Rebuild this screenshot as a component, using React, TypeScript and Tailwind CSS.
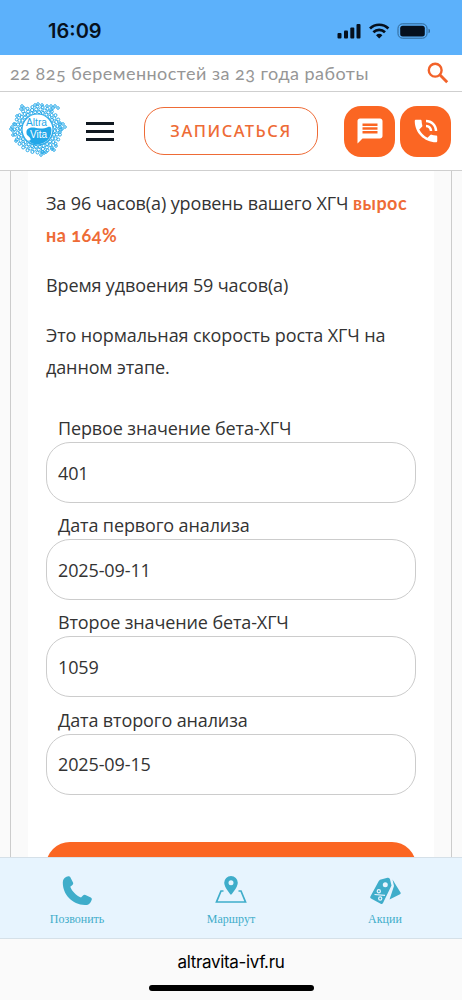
import { MdMessage, MdPhoneInTalk } from "react-icons/md";

const fields = [
  { label: "Первое значение бета-ХГЧ", value: "401" },
  { label: "Дата первого анализа", value: "2025-09-11" },
  { label: "Второе значение бета-ХГЧ", value: "1059" },
  { label: "Дата второго анализа", value: "2025-09-15" },
];

// Bubbles around the logo disc: [radius of the ring, count, bubble size]
const rings = [
  [17.4, 28, 1.5],
  [20.2, 30, 1.6],
  [23, 28, 1.5],
];

// Loose bubbles outside the rings
const splashes = [
  [17, 7], [19, 9], [16, 10], [42, 7], [46, 7], [50, 7], [48, 9], [46, 11], [53, 9],
  [55, 24], [58, 25], [60, 28], [57, 30], [55, 28], [55, 33], [7, 28], [8, 32],
  [9, 25], [6, 30], [8, 36], [36, 56], [39, 54], [41, 53], [37, 53], [47, 50],
  [49, 51], [51, 47], [12, 17], [30, 6], [33, 5], [37, 6], [11, 42],
];

const Logo = () => (
  <svg className="h-[64px] w-[66px] shrink-0" viewBox="0 0 66 64">
    <g fill="none" stroke="#2cabe9" strokeWidth="1">
      {rings.map(([ring, count, size]) =>
        Array.from({ length: count }, (_, i) => {
          const angle = ((i + ring) / count) * Math.PI * 2;
          return (
            <circle
              key={`${ring}-${i}`}
              cx={32.5 + Math.cos(angle) * ring}
              cy={30.5 + Math.sin(angle) * ring}
              r={size}
            />
          );
        })
      )}
      {splashes.map(([x, y]) => (
        <circle key={`${x}-${y}`} cx={x} cy={y} r="1.3" />
      ))}
    </g>
    <circle cx="32.500" cy="30.500" r="15.500" fill="#fff" stroke="#2cabe9" strokeWidth="1.200" />
    <path d="M22 36C20 30 24 28 29 28.500C34 30 39 30 43 28C45 27 46.500 28 46.500 31A14 14 0 0 1 23 41.500C28 42 25 38 22 36Z" fill="#22a7e8" />
    <text x="21" y="27" fontSize="10" fill="#22a7e8" fontFamily="Liberation Sans" textLength="21" lengthAdjust="spacingAndGlyphs">
      Altra
    </text>
    <text x="25" y="39" fontSize="10" fill="#fff" fontFamily="Liberation Sans" textLength="17" lengthAdjust="spacingAndGlyphs">
      Vita
    </text>
  </svg>
);

const StatusBar = () => (
  <div className="flex h-[55px] items-center justify-between bg-[#5cb1fb] pt-[7px] pr-[31px] pl-[48px] text-[#06101d]">
    <span className="font-[Inter,sans-serif] text-[20px] font-semibold">16:09</span>
    <svg className="h-[16px] w-[94px]" viewBox="0 0 94 16" fill="#06101d">
      <rect x="0.500" y="10" width="4" height="5.500" rx="1" />
      <rect x="7" y="7.500" width="4" height="8" rx="1" />
      <rect x="13.300" y="4.500" width="4" height="11" rx="1" />
      <rect x="19.500" y="1" width="4" height="14.500" rx="1" />
      <g fill="none" stroke="#06101d" strokeWidth="2.700">
        <path d="M33 5.500a13.200 13.200 0 0 1 18.400 0" />
        <path d="M36.400 9.300a8.300 8.300 0 0 1 11.600 0" />
      </g>
      <path d="M39 12.300a4.800 4.800 0 0 1 6.400 0L42.200 15.500Z" />
      <rect x="61" y="0.800" width="29" height="14.400" rx="4.500" fill="none" stroke="#2f6593" />
      <rect x="63.200" y="2.800" width="24.600" height="10.600" rx="2.500" />
      <path d="M91.500 5.800c2 .5 2 4 0 4.500Z" fill="#2f6593" />
    </svg>
  </div>
);

const SearchIcon = () => (
  <svg className="size-[22px]" viewBox="0 0 22 22" fill="none" stroke="#f2622a" strokeWidth="2.400">
    <circle cx="8.200" cy="8.200" r="6.400" />
    <path d="m12.800 12.800 7.400 7.400" strokeWidth="2.900" />
  </svg>
);

const PhoneIcon = () => (
  <svg className="h-[30px] w-[30px]" viewBox="0 0 30 30" fill="#3fadca">
    <path d="M4.500.8 6.300.2Q7.600 0 8.200 1L11 6.500q.6 1.500-.6 2.500L8.300 10.800C9.600 15 14.500 20 19 21.500L21 19.400q1-1.100 2.500-.5l5.300 2.600q1.300.7 1 2L29 25.400Q27.500 29 23 29C10 28.500.8 18.500.8 6.500.9 3.800 2 1.800 4.500.8Z" />
  </svg>
);

const MapIcon = () => (
  <svg className="mb-[2px] h-[28px] w-[32px]" viewBox="0 0 32 28">
    <path d="M8.500 15H6L1.500 26H30.500L26 15H23.500" fill="none" stroke="#3fadca" strokeWidth="1.700" />
    <path
      d="M16 0a6.800 6.800 0 0 0-6.800 6.800C9.200 11.500 16 19 16 19s6.800-7.500 6.800-12.200A6.800 6.800 0 0 0 16 0Zm0 4.200a2.500 2.500 0 1 1 0 5A2.500 2.500 0 0 1 16 4.200Z"
      fill="#3fadca"
      fillRule="evenodd"
    />
  </svg>
);

const TagsIcon = () => (
  <svg className="h-[28px] w-[32px]" viewBox="0 0 32 28">
    <path d="M11 2.800 18.500.8q2-.4 2.500 1.500L22.500 8.500 14 26q-.8 1.600-2.300.8L2 21.500Q.7 20.800 1.400 19.400L9.800 4Z" fill="#3fadca" />
    <path d="m23.500 2.500 8 13q.6 1-.5 1.700L20.500 22.500 25 9Z" fill="#3fadca" />
    <circle cx="16.300" cy="7.700" r="2.500" fill="#e7f4fe" />
    <g fill="none" stroke="#e7f4fe" strokeWidth="1.200">
      <circle cx="9.800" cy="14.300" r="1.600" />
      <circle cx="11.200" cy="21.500" r="1.600" />
      <path d="m5.500 17.500 10.500.8" />
    </g>
  </svg>
);

const tabs = [
  { title: "Позвонить", icon: <PhoneIcon /> },
  { title: "Маршрут", icon: <MapIcon /> },
  { title: "Акции", icon: <TagsIcon /> },
];

export default function App() {
  return (
    <div className="flex h-[1000px] w-[462px] flex-col overflow-hidden bg-white font-['Open_Sans','Noto_Sans',sans-serif] text-[#333]">
      <StatusBar />

      <div className="flex h-[37px] shrink-0 items-center justify-between border-b border-[#cfcfcf] pr-[13px] pl-[10px]">
        <span className="font-[Lato,'Open_Sans',sans-serif] text-[18px] tracking-[0.480px] whitespace-nowrap text-[#969696] oldstyle-nums">
          22 825 беременностей за 23 года работы
        </span>
        <SearchIcon />
      </div>

      <header className="flex h-[79px] shrink-0 items-center border-b border-[#cfcfcf] pl-[5px]">
        <Logo />
        <div className="ml-[15px] flex w-[28px] flex-col gap-[5px]">
          <span className="h-[3px] bg-[#101820]" />
          <span className="h-[3px] bg-[#101820]" />
          <span className="h-[3px] bg-[#101820]" />
        </div>
        <button className="ml-[30px] h-[48px] w-[174px] rounded-[20px] border border-[#ee6b36] font-['Noto_Sans',sans-serif] text-[16.500px] font-medium tracking-[1.500px] text-[#ee6b36]">
          ЗАПИСАТЬСЯ
        </button>
        <div className="ml-[26px] flex gap-[5px] text-white">
          <span className="flex size-[51px] items-center justify-center rounded-[17px] bg-[#fb6623]">
            <MdMessage className="size-[30px]" />
          </span>
          <span className="flex size-[51px] items-center justify-center rounded-[17px] bg-[#fb6623]">
            <MdPhoneInTalk className="size-[30px]" />
          </span>
        </div>
      </header>

      <main className="flex min-h-0 flex-1 overflow-hidden bg-[#fafafa] px-[10px]">
        <div className="h-full w-full border-x border-[#cccccc] px-[17px]">
          <div className="h-full bg-white px-[18px] pt-[16px] text-[18px] tracking-[-0.120px]">
            <p className="leading-[32px]">
              За 96 часов(а) уровень вашего ХГЧ{" "}
              <b className="font-[Lato,'Open_Sans',sans-serif] font-bold tracking-[0.500px] text-[#ee6b36] oldstyle-nums">
                вырос
                <br />
                на 164%
              </b>
            </p>
            <p className="mt-[18px] leading-[32px]">Время удвоения 59 часов(а)</p>
            <p className="mt-[18px] leading-[32px]">
              Это нормальная скорость роста ХГЧ на
              <br />
              данном этапе.
            </p>
            <form className="mt-[31px]">
              {fields.map(({ label, value }) => (
                <div key={label} className="h-[97.200px]">
                  <div className="h-[28px] pl-[12px] leading-[28px]">{label}</div>
                  <div className="flex h-[61px] w-[370px] items-center rounded-[24px] border border-[#cccccc] pt-[1px] pl-[11px]">
                    {value}
                  </div>
                </div>
              ))}
              <div className="mt-[39px] h-[61px] w-[370px] rounded-[24px] bg-[#fb6623]" />
            </form>
          </div>
        </div>
      </main>

      <nav className="grid h-[82px] shrink-0 grid-cols-3 border-y border-[#d5e0e8] bg-[#e7f4fe]">
        {tabs.map(({ title, icon }) => (
          <div key={title} className="flex flex-col items-center pt-[14px]">
            <div className="flex h-[38px] items-center justify-center">{icon}</div>
            <span className="font-['Liberation_Serif',serif] text-[12px] leading-[18px] text-[#3fadca]">{title}</span>
          </div>
        ))}
      </nav>

      <footer className="flex h-[61px] shrink-0 flex-col items-center bg-[#fafafa] pt-[10px] text-black">
        <span className="font-[Inter,sans-serif] text-[17px] leading-[26px] tracking-[-0.350px]">altravita-ivf.ru</span>
        <span className="mt-[10px] h-[6px] w-[165px] rounded-full bg-black" />
      </footer>
    </div>
  );
}
